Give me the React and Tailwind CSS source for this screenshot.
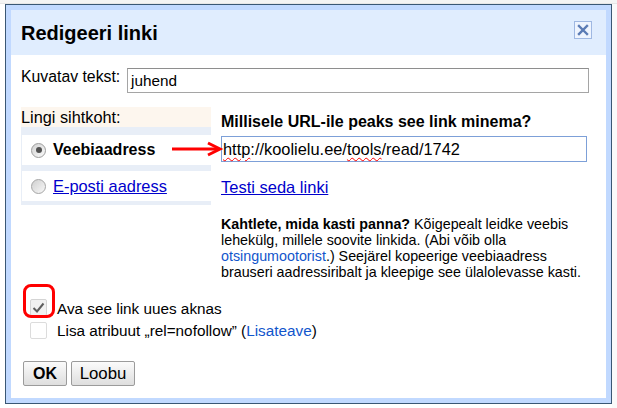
export default function App() {
  return (
    <div className="relative w-[617px] h-[408px] overflow-hidden bg-white font-['Liberation_Sans',Arial,sans-serif] text-black">
      {/* faint page behind */}
      <div className="h-[4px] w-full bg-[#f4f4f4] border-b border-[#e6e6e6]" />
      <div className="absolute left-[612px] top-[4px] w-[5px] h-[404px] bg-[#fafafa]" />

      {/* dialog */}
      <div className="absolute left-[5px] top-[4px] w-[607px] h-[400px] border border-[#3a5774] bg-[#c1d9ff] p-[5px]">
        <div className="flex h-full flex-col bg-white">
          {/* title */}
          <div className="flex h-[45px] shrink-0 items-start justify-between bg-[#e0edfe] pl-[10px] pr-[14px]">
            <div className="mt-[11px] text-[20px] font-bold leading-[24px]">Redigeeri linki</div>
            <div className="mt-[11px] flex h-[18px] w-[18px] items-center justify-center border border-[#9fb8e2] bg-[#eef4fe]">
              <svg width="12" height="12" viewBox="0 0 12 12">
                <path d="M2 2 L10 10 M10 2 L2 10" stroke="#5a7bb5" strokeWidth="2.4" strokeLinecap="square" />
              </svg>
            </div>
          </div>

          {/* body */}
          <div className="relative flex flex-1 flex-col px-[10px]">
            {/* display text */}
            <div className="mt-[13px] flex items-start">
              <div className="w-[106px] text-[15.8px] leading-[18px]">Kuvatav tekst:</div>
              <div className="flex h-[25px] w-[462px] items-center border border-[#a5a5a5] border-t-[#8e8e8e] pl-[3px] text-[15.3px] leading-[18px]">
                juhend
              </div>
            </div>

            {/* target section */}
            <div className="mt-[14px] flex gap-[10px]">
              <div className="w-[190px] shrink-0">
                <div className="h-[20px] bg-[#fdf6ee] text-[16.3px] leading-[20px]">Lingi sihtkoht:</div>
                <div className="flex flex-col gap-[6px] bg-[#e8eef7] pb-[4px] pl-[1px] pt-[8px]">
                  <div className="flex h-[30px] items-center gap-[7px] bg-white pl-[9px]">
                    <div className="flex h-[15px] w-[15px] items-center justify-center rounded-full border border-[#9c9c9c] bg-gradient-to-br from-[#d2d2d2] to-[#fafafa]">
                      <div className="h-[6px] w-[6px] rounded-full bg-[#505050]" />
                    </div>
                    <span className="text-[16px] font-bold leading-[18px]">Veebiaadress</span>
                  </div>
                  <div className="flex h-[30px] items-center gap-[7px] bg-white pl-[9px]">
                    <div className="h-[15px] w-[15px] rounded-full border border-[#a5a5a5] bg-gradient-to-br from-[#d0d0d0] to-[#f8f8f8]" />
                    <span className="text-[16.4px] leading-[18px] text-[#0000cc] underline">E-posti aadress</span>
                  </div>
                </div>
              </div>

              <div className="flex flex-1 flex-col">
                <div className="mt-[6px] text-[16px] font-bold leading-[18px]">Millisele URL-ile peaks see link minema?</div>
                <div className="mt-[5px] flex h-[26px] w-[366px] items-center border border-[#7da0d8] pl-[1px] text-[16.4px] leading-[18px]">
                  <span className="underline decoration-[#ff0000] decoration-wavy decoration-1 underline-offset-[2px]">http</span>
                  <span>://koolielu.ee/</span>
                  <span className="underline decoration-[#ff0000] decoration-wavy decoration-1 underline-offset-[2px]">tools</span>
                  <span>/read/1742</span>
                </div>
                <div className="mt-[16px] text-[16.5px] leading-[18px] text-[#0000cc] underline">Testi seda linki</div>
                <div className="mt-[20px] text-[14.3px] leading-[16px]">
                  <b>Kahtlete, mida kasti panna?</b> Kõigepealt leidke veebis
                  <br />
                  lehekülg, millele soovite linkida. (Abi võib olla
                  <br />
                  <span className="text-[#1155cc]">otsingumootorist</span>.) Seejärel kopeerige veebiaadress
                  <br />
                  brauseri aadressiribalt ja kleepige see ülalolevasse kasti.
                </div>
              </div>
            </div>

            {/* checkboxes */}
            <div className="relative mt-[18px] flex flex-col">
              <div className="flex h-[22px] items-center gap-[10px] pl-[9px]">
                <div className="-mt-[3px] flex h-[17px] w-[17px] items-center justify-center rounded-[2px] border border-[#d4d4d4] bg-[#f1f1f1]">
                  <svg width="13" height="11" viewBox="0 0 13 11">
                    <path d="M1.5 6 L5 9.5 L11.5 1.5" stroke="#5e5e5e" strokeWidth="2" fill="none" />
                  </svg>
                </div>
                <span className="text-[15.3px] leading-[18px]">Ava see link uues aknas</span>
              </div>
              <div className="flex h-[22px] items-center gap-[10px] pl-[9px]">
                <div className="-mt-[2px] h-[17px] w-[17px] rounded-[2px] border border-[#dcdcdc] bg-white" />
                <span className="text-[15.3px] leading-[18px]">
                  Lisa atribuut „rel=nofollow” (<span className="text-[#1155cc]">Lisateave</span>)
                </span>
              </div>
              <div className="absolute left-[2px] top-[-14px] h-[34px] w-[32px] rounded-[8px] border-[3px] border-[#ff0000]" />
            </div>

            {/* buttons */}
            <div className="mt-[19px] flex gap-[4px] pl-[2px]">
              <div className="flex h-[25px] w-[44px] items-center justify-center rounded-[2px] border border-[#9b9b9b] bg-gradient-to-b from-[#fbfbfb] to-[#dedede] text-[16px] font-bold leading-[18px]">
                OK
              </div>
              <div className="flex h-[25px] w-[64px] items-center justify-center rounded-[2px] border border-[#9b9b9b] bg-gradient-to-b from-[#fbfbfb] to-[#dedede] text-[16.8px] leading-[18px]">
                Loobu
              </div>
            </div>
          </div>
        </div>
      </div>

      {/* red arrow */}
      <svg className="absolute left-[170px] top-[140px]" width="54" height="18" viewBox="0 0 54 18">
        <path d="M2 9 H48" stroke="#ff0000" strokeWidth="3" />
        <path d="M38 3 L50 9 L38 15" stroke="#ff0000" strokeWidth="3" fill="none" />
      </svg>
    </div>
  );
}
